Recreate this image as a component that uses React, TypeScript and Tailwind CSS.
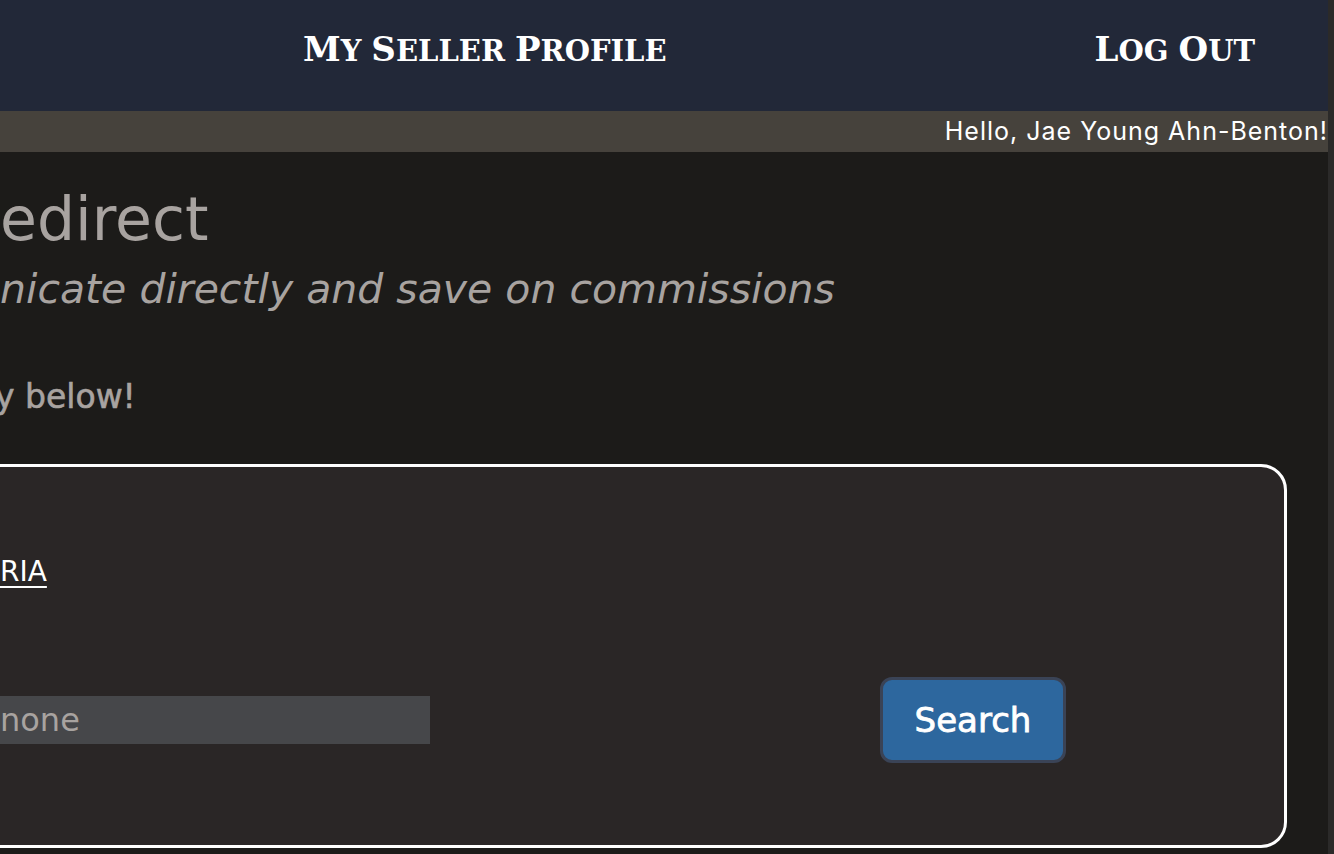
import React from "react";

const navFont = { fontFamily: '"DejaVu Serif", "Liberation Serif", serif' };
const roundFont = { fontFamily: '"DejaVu Sans", "Noto Sans", sans-serif' };

// Uppercase words where the first letter is larger, like the nav's small caps
function SmallCaps({ text }: { text: string }) {
  return (
    <span className="inline-flex items-baseline gap-[10px]">
      {text.split(" ").map((word, i) => (
        <span key={i} className="inline-flex items-baseline">
          <span className="text-[34px]">{word[0].toUpperCase()}</span>
          <span className="text-[29px]">{word.slice(1).toUpperCase()}</span>
        </span>
      ))}
    </span>
  );
}

export default function App() {
  return (
    <div className="w-[1334px] h-[854px] overflow-hidden bg-[#1c1b19] flex">
      <div className="flex-1 min-w-0 flex flex-col">
        {/* Top nav */}
        <nav
          className="h-[111px] shrink-0 bg-[#222838] text-white font-bold flex items-center pl-[303px] pr-[73px] pb-[14px] justify-between"
          style={navFont}
        >
          <a className="leading-none">
            <SmallCaps text="My Seller Profile" />
          </a>
          <a className="leading-none">
            <SmallCaps text="Log Out" />
          </a>
        </nav>

        {/* Greeting bar */}
        <div
          className="h-[41px] shrink-0 bg-[#46423c] text-white text-[25px] tracking-[1px] leading-[41px] text-right whitespace-nowrap"
          style={{ fontFamily: 'Inter, "Noto Sans", sans-serif' }}
        >
          Hello, Jae Young Ahn-Benton!
        </div>

        {/* Main */}
        <main className="flex-1 flex flex-col text-[#a8a3a0] pt-[32px]" style={roundFont}>
          <h1 className="text-[60px] leading-[70px] whitespace-nowrap">edirect</h1>
          <h2 className="mt-[10px] text-[41px] leading-[50px] italic whitespace-nowrap">
            nicate directly and save on commissions
          </h2>
          <p className="mt-[63px] -ml-[5px] text-[33px] leading-[40px] whitespace-nowrap [-webkit-text-stroke:0.6px_#a8a3a0]">
            y below!
          </p>

          {/* Search card */}
          <section className="mt-[47px] -ml-[40px] w-[1327px] h-[384px] shrink-0 rounded-[26px] border-[3px] border-white bg-[#2a2626] pl-[37px] pt-[87px] flex flex-col">
            <a className="text-white text-[28px] leading-[36px] underline underline-offset-[5px] decoration-2 whitespace-nowrap">
              RIA
            </a>
            <div className="mt-[87px] flex items-center gap-[450px]">
              <input
                className="w-[430px] h-[48px] bg-[#46474a] pl-0 text-[32px] text-[#a8a3a0] placeholder:text-[#a8a3a0] outline-none"
                placeholder="none"
              />
              <button className="w-[186px] h-[86px] rounded-[12px] border-[3px] border-[#3a4356] bg-[#2d679e] text-white text-[34px] [-webkit-text-stroke:0.8px_white]">
                Search
              </button>
            </div>
          </section>
        </main>
      </div>
      {/* Scrollbar strip */}
      <div className="w-[6px] shrink-0 bg-[#2b2a29]" />
    </div>
  );
}
